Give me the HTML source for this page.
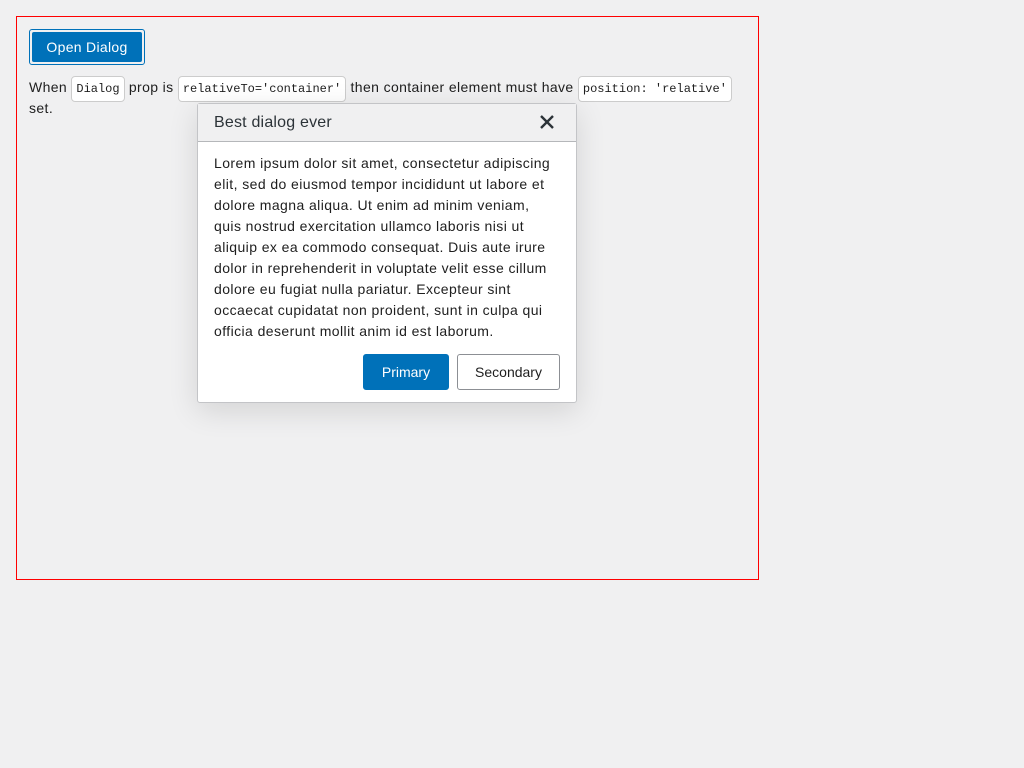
<!DOCTYPE html>
<html><head><style>
body{margin:0;background:#f0f0f1;font-family:"Liberation Sans",sans-serif;font-size:14px;color:#1e1e1e;width:1024px;height:768px;overflow:hidden}
.box{position:absolute;left:16px;top:16px;width:741px;height:562px;border:1px solid #f00}
.btn{position:absolute;left:12px;top:12px;width:116px;height:36px;box-sizing:border-box;border:1px solid #0071b9;border-radius:3px;padding:2px}
.btn div{background:#0071b9;color:#fff;height:100%;border-radius:2px;text-align:center;line-height:30px;font-size:14px;letter-spacing:.3px}
.p{position:absolute;left:12px;top:60px;width:730px;line-height:21px;white-space:nowrap;letter-spacing:.38px}
code{font-family:"Liberation Mono",monospace;font-size:12px;letter-spacing:0;background:#fff;border:1px solid #ccc;border-radius:4px;padding:5px 4px;line-height:15px}
.dlg{position:absolute;left:197px;top:103px;width:378px;height:298px;background:#fff;border:1px solid #c3c4c7;border-radius:3px;box-shadow:0 8px 30px rgba(0,0,0,.12)}
.hd{height:37px;background:#f0f0f1;border-bottom:1px solid #b5b7ba;position:relative}
.hd span{position:absolute;left:16px;top:10px;font-size:16px;color:#2c3338;letter-spacing:.2px}
.x{position:absolute;right:21px;top:10px}
.bd{padding:11px 16px 0;line-height:21px;white-space:nowrap;color:#1e1e1e;letter-spacing:.42px}
.b1,.b2{position:absolute;top:250px;height:36px;box-sizing:border-box;border-radius:3px;line-height:34px;text-align:center}
.b1{left:165px;width:86px;background:#0071b9;color:#fff;border:1px solid #0071b9}
.b2{left:259px;width:103px;background:#fff;border:1px solid #8c8f94;color:#1e1e1e}
</style></head><body>
<div class="box">
<div class="btn"><div>Open Dialog</div></div>
<div class="p">When <code>Dialog</code> prop is <code>relativeTo='container'</code> then container element must have <code>position: 'relative'</code><br>set.</div>
</div>
<div class="dlg">
<div class="hd"><span>Best dialog ever</span>
<svg class="x" width="16" height="16" viewBox="0 0 16 16"><path d="M2 2L14 14M14 2L2 14" stroke="#2c3338" stroke-width="2.4"/></svg></div>
<div class="bd">Lorem ipsum dolor sit amet, consectetur adipiscing<br>elit, sed do eiusmod tempor incididunt ut labore et<br>dolore magna aliqua. Ut enim ad minim veniam,<br>quis nostrud exercitation ullamco laboris nisi ut<br>aliquip ex ea commodo consequat. Duis aute irure<br>dolor in reprehenderit in voluptate velit esse cillum<br>dolore eu fugiat nulla pariatur. Excepteur sint<br>occaecat cupidatat non proident, sunt in culpa qui<br>officia deserunt mollit anim id est laborum.</div>
<div class="b1">Primary</div><div class="b2">Secondary</div>
</div>
</body></html>
